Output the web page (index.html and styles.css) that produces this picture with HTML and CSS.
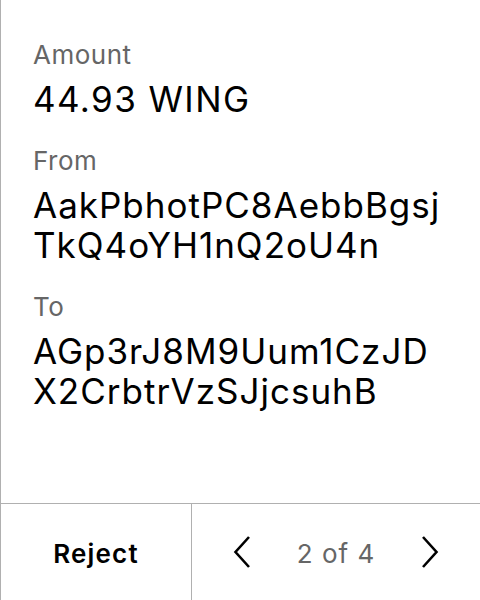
FILE: index.html
```html
<!DOCTYPE html>
<html>
<head>
<meta charset="utf-8">
<link rel="stylesheet" href="styles.css">
</head>
<body>
<div class="screen">
  <div class="content">
    <div class="field">
      <div class="label">Amount</div>
      <div class="value amount">44.93 WING</div>
    </div>
    <div class="field">
      <div class="label">From</div>
      <div class="value addr">AakPbhotPC8AebbBgsj<br>TkQ4oYH1nQ2oU4n</div>
    </div>
    <div class="field">
      <div class="label">To</div>
      <div class="value addr">AGp3rJ8M9Uum1CzJD<br>X2CrbtrVzSJjcsuhB</div>
    </div>
  </div>
  <div class="footer">
    <div class="reject">Reject</div>
    <div class="pager">
      <svg class="chev" width="20" height="34" viewBox="0 0 20 34"><path d="M17 2 L3.5 17 L17 32" fill="none" stroke="#000" stroke-width="2.6"/></svg>
      <span class="count">2 of 4</span>
      <svg class="chev" width="20" height="34" viewBox="0 0 20 34"><path d="M3 2 L16.5 17 L3 32" fill="none" stroke="#000" stroke-width="2.6"/></svg>
    </div>
  </div>
</div>
</body>
</html>
```
FILE: styles.css
```css
html, body { margin: 0; padding: 0; background: #fff; }
body { font-family: Inter, "Noto Sans", sans-serif; color: #000; }
.screen {
  width: 480px; height: 600px; box-sizing: border-box;
  border-left: 1px solid #b0b0b0;
  display: flex; flex-direction: column;
}
.content { flex: 1; padding: 39px 0 0 32px; display: flex; flex-direction: column; gap: 26px; }
.label { font-size: 26px; color: #666; line-height: 32px; letter-spacing: 0.5px; }
.value { font-size: 35px; line-height: 40px; margin-top: 8px; letter-spacing: 1px; }
.amount { letter-spacing: 1.4px; }
.footer { height: 96px; border-top: 1px solid #b0b0b0; display: flex; }
.reject { width: 191px; border-right: 1px solid #b0b0b0; display: flex; align-items: center; justify-content: center; font-weight: 600; font-size: 26px; letter-spacing: 1.2px; padding-top: 2px; box-sizing: border-box; }
.pager { flex: 1; display: flex; align-items: center; justify-content: space-between; padding: 0 40px 0 40px; }
.count { font-size: 26px; color: #666; letter-spacing: 1px; padding-top: 2px; }
```
